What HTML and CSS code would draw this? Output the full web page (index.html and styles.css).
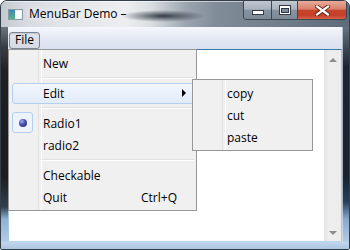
FILE: index.html
```html
<!DOCTYPE html>
<html>
<head>
  <meta charset="utf-8">
  <title>MenuBar Demo</title>
  <link rel="stylesheet" href="styles.css">
</head>
<body>
  <div class="window">
    <div class="titlebar">
      <svg class="app-icon" width="15" height="11" viewBox="0 0 15 11">
        <defs>
          <linearGradient id="icon-fill" x1="0" y1="0" x2="0" y2="1">
            <stop offset="0" stop-color="#3f86b8"/>
            <stop offset="1" stop-color="#52b58a"/>
          </linearGradient>
        </defs>
        <rect x="0.5" y="0.5" width="14" height="10" fill="#eef1f3" stroke="#8c99a4"/>
        <rect x="1" y="1" width="6" height="9" fill="url(#icon-fill)"/>
        <rect x="8" y="2" width="5" height="7" fill="#fbfcfc"/>
      </svg>
      <span class="title">MenuBar Demo –</span>
      <div class="caption-buttons">
        <div class="cap-btn min">
          <svg width="12" height="5" viewBox="0 0 12 5">
            <rect x="0.5" y="0.5" width="11" height="4" fill="#fff" stroke="#2f3a46"/>
          </svg>
        </div>
        <div class="cap-btn max">
          <svg width="12" height="10" viewBox="0 0 12 10">
            <rect x="0.5" y="0.5" width="11" height="9" fill="#fff" stroke="#2f3a46"/>
            <rect x="2.5" y="3.5" width="7" height="4" fill="#7d8a97" stroke="#2f3a46"/>
          </svg>
        </div>
        <div class="cap-btn close">
          <svg width="15" height="11" viewBox="0 0 15 11">
            <path d="M2 1.5 L13 9.5 M13 1.5 L2 9.5" stroke="#5a1e12" stroke-width="4" stroke-linecap="square"/>
            <path d="M2 1.5 L13 9.5 M13 1.5 L2 9.5" stroke="#fff" stroke-width="2.2" stroke-linecap="square"/>
          </svg>
        </div>
      </div>
    </div>

    <div class="frame">
      <div class="frame-left"></div>
      <div class="client">
        <div class="menubar">
          <span class="menubar-item active">File</span>
        </div>
        <div class="editor">
          <div class="editor-text"></div>
          <div class="scrollbar">
            <div class="scroll-btn"><span class="arrow-up"></span></div>
            <div class="scroll-btn"><span class="arrow-down"></span></div>
          </div>
        </div>
      </div>
      <div class="frame-right"></div>
    </div>
    <div class="frame-bottom"></div>

    <!-- open File menu -->
    <div class="menu file-menu">
      <div class="menu-item">New</div>
      <div class="menu-sep"></div>
      <div class="menu-item hover">Edit <span class="submenu-arrow"></span></div>
      <div class="menu-sep"></div>
      <div class="menu-item"><span class="radio-box"><span class="radio-dot"></span></span>Radio1</div>
      <div class="menu-item">radio2</div>
      <div class="menu-sep"></div>
      <div class="menu-item">Checkable</div>
      <div class="menu-item">Quit <span class="shortcut">Ctrl+Q</span></div>
    </div>

    <!-- Edit submenu -->
    <div class="menu edit-menu">
      <div class="menu-item">copy</div>
      <div class="menu-item">cut</div>
      <div class="menu-item">paste</div>
    </div>
  </div>
</body>
</html>
```

FILE: styles.css
```css
* {
  box-sizing: border-box;
}

body {
  margin: 0;
  font-family: "Open Sans", "Noto Sans", Arial, sans-serif;
  font-size: 12px;
  color: #000;
  background: #fff;
}

.window {
  position: relative;
  width: 350px;
  height: 250px;
  display: flex;
  flex-direction: column;
  border: 1px solid #343e49;
  border-radius: 7px 7px 2px 2px;
  overflow: hidden;
  background: #7d8a97;
}

/* title bar */

.titlebar {
  height: 26px;
  flex: none;
  display: flex;
  align-items: flex-start;
  background:
    radial-gradient(42px 6px at 162px 15px, rgba(36, 44, 54, 0.9), rgba(36, 44, 54, 0)),
    linear-gradient(90deg, #c3c9d0 0, #d7dbe0 25px, #e3e6e9 70px, #eceef0 125px, #dadee2 150px, #9ba5af 185px, #808c98 215px, #76838f 260px, #5d6a77 350px);
  box-shadow: inset 0 1px 0 rgba(255, 255, 255, 0.55);
}

.app-icon {
  flex: none;
  margin: 8px 0 0 7px;
}

.title {
  margin-left: 6px;
  line-height: 26px;
  white-space: nowrap;
  text-shadow: 0 0 6px #fff, 0 0 10px rgba(255, 255, 255, 0.8);
}

.caption-buttons {
  margin-left: auto;
  margin-right: 2px;
  display: flex;
  height: 19px;
  border: 1px solid #3d4855;
  border-top: 0;
  border-radius: 0 0 4px 4px;
  overflow: hidden;
}

.cap-btn {
  display: flex;
  align-items: center;
  justify-content: center;
}

.cap-btn.min,
.cap-btn.max {
  background: linear-gradient(#c0c8d1 0, #a9b3be 45%, #86939f 52%, #7c8a98 100%);
}

.cap-btn.min {
  width: 27px;
}

.cap-btn.min svg {
  margin-top: 5px;
}

.cap-btn.max {
  width: 26px;
  border-left: 1px solid #3d4855;
}

.cap-btn.close {
  width: 49px;
  border-left: 1px solid #3d4855;
  background: linear-gradient(#e9ab9c 0, #d97f69 45%, #c5452a 52%, #c4402a 80%, #d6644a 100%);
}

/* frame + client */

.frame {
  flex: 1;
  display: flex;
}

.frame-left {
  width: 7px;
  background: linear-gradient(#6c757e 0, #3a3e43 20px, #1f2022 45px, #1c1d1f 150px, #31404f 180px, #8fb0d3 192px, #b5cde6 215px);
}

.frame-right {
  width: 7px;
  border-left: 1px solid rgba(220, 232, 245, 0.7);
  background: linear-gradient(#66737f 0, #3f4b57 20px, #1b2531 40px, #182230 150px, #27405b 175px, #86a8cc 192px, #b5cde6 215px);
}

.frame-bottom {
  height: 7px;
  flex: none;
  background: linear-gradient(#c2d6ec, #adc6e1);
}

.client {
  flex: 1;
  display: flex;
  flex-direction: column;
}

.menubar {
  height: 22px;
  flex: none;
  display: flex;
  align-items: flex-end;
  padding-left: 1px;
  background: linear-gradient(#f5f7fc, #e4e9f3 50%, #d8dfee);
}

.menubar-item {
  height: 17px;
  padding: 0 5px 2px;
  line-height: 13px;
  border: 1px solid #7b8691;
  border-radius: 3px;
}

.menubar-item.active {
  background: linear-gradient(#e1e5ec, #d5dae4);
  box-shadow: inset 0 1px 1px rgba(0, 0, 0, 0.12);
}

.editor {
  flex: 1;
  display: flex;
  border: 1px solid #a4c9e3;
  border-top-color: #3d7bad;
  border-bottom-color: #b7d9ed;
  background: #fff;
}

.editor-text {
  flex: 1;
}

.scrollbar {
  width: 17px;
  display: flex;
  flex-direction: column;
  justify-content: space-between;
  background: linear-gradient(90deg, #e3e3e3, #eeeeee 30%, #ececec);
}

.scroll-btn {
  height: 17px;
  display: flex;
  align-items: center;
  justify-content: center;
}

.arrow-up {
  margin-top: 3px;
  border-left: 4px solid transparent;
  border-right: 4px solid transparent;
  border-bottom: 4px solid #8c8c8c;
}

.arrow-down {
  border-left: 4px solid transparent;
  border-right: 4px solid transparent;
  border-top: 4px solid #8c8c8c;
}

/* popup menus */

.menu {
  position: absolute;
  z-index: 2;
  background: #f0f0f0;
  border: 1px solid #979797;
  padding: 2px 2px 2px 3px;
}

.menu::before {
  content: "";
  position: absolute;
  left: 29px;
  top: 0;
  bottom: 0;
  width: 2px;
  border-left: 1px solid #e2e3e3;
  border-right: 1px solid #fff;
}

.file-menu {
  left: 7px;
  top: 48px;
  width: 189px;
  height: 162px;
}

.edit-menu {
  left: 191px;
  top: 78px;
  width: 121px;
  height: 72px;
}

.menu-item {
  position: relative;
  z-index: 0;
  display: flex;
  align-items: center;
  height: 22px;
  padding-left: 31px;
  white-space: nowrap;
}

.menu-item.hover::before {
  content: "";
  position: absolute;
  z-index: -1;
  left: 0;
  right: 0;
  top: 1px;
  bottom: 0;
  border: 1px solid #b4d0f1;
  border-radius: 3px;
  background: linear-gradient(#f2f7fe, #e2ebf8);
}

.menu-sep {
  height: 8px;
  margin-left: 28px;
  padding-top: 3px;
}

.menu-sep::after {
  content: "";
  display: block;
  border-top: 1px solid #e0e0e0;
  border-bottom: 1px solid #fff;
}

.submenu-arrow {
  margin-left: auto;
  margin-right: 8px;
  border-top: 4px solid transparent;
  border-bottom: 4px solid transparent;
  border-left: 4px solid #000;
}

.shortcut {
  margin-left: auto;
  margin-right: 17px;
}

.radio-box {
  position: absolute;
  left: 0;
  top: 0;
  width: 21px;
  height: 21px;
  display: flex;
  align-items: center;
  justify-content: center;
  border: 1px solid #b4d0f1;
  border-radius: 3px;
  background: #eef3fb;
}

.radio-dot {
  width: 8px;
  height: 8px;
  border-radius: 50%;
  background: radial-gradient(circle at 35% 30%, #a9b1ea 0, #4a54b4 40%, #1a226c 100%);
}
```
